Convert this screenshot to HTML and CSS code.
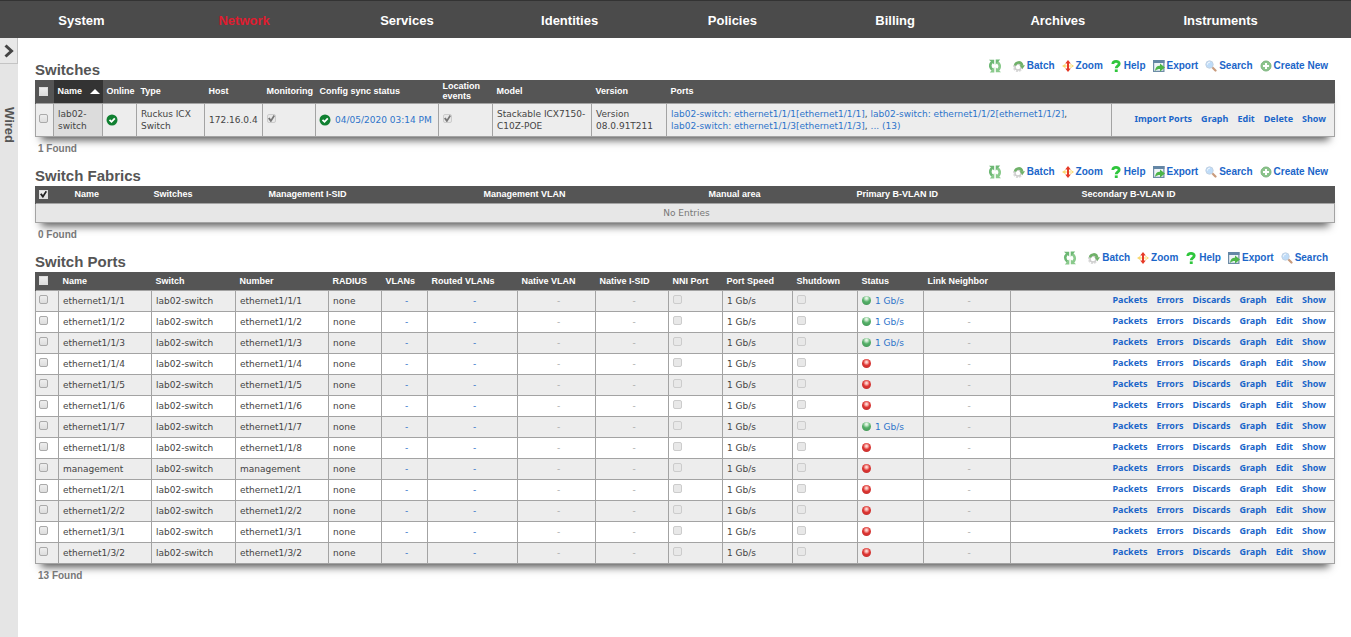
FILE: index.html
```html
<!DOCTYPE html>
<html lang="en">
<head>
<meta charset="utf-8">
<title>Network - Wired</title>
<link rel="stylesheet" href="styles.css">
</head>
<body>
<svg class="sprite" aria-hidden="true">
  <symbol id="i-refresh" viewBox="0 0 14 14">
    <path d="M5.500 2.500C1.800 3.500 1 8 4.500 10.800" fill="none" stroke="#6db874" stroke-width="2.600"/>
    <path d="M1 .8h5.200v4.700z" fill="#6db874"/>
    <path d="M6.300 8.200v5.200H1.800z" fill="#8aca8c"/>
    <path d="M8.500 11.500C12.200 10.500 13 6 9.500 3.200" fill="none" stroke="#8aca8c" stroke-width="2.600"/>
    <path d="M13 13.200H7.800V8.500z" fill="#8aca8c"/>
    <path d="M7.700 5.800V.6h4.500z" fill="#6db874"/>
  </symbol>
  <symbol id="i-batch" viewBox="0 0 12 12">
    <circle cx="5" cy="7" r="4" fill="none" stroke="#dcdcdc" stroke-width="2.400" stroke-dasharray="2 1"/>
    <circle cx="5" cy="7" r="3" fill="none" stroke="#cecece" stroke-width="1.500"/>
    <path d="M2 5.500C3 1.800 8 1 9.200 5.500" fill="none" stroke="#6fb168" stroke-width="2.600"/>
    <path d="M6.500 5.200H12L9.400 9z" fill="#6fb168"/>
  </symbol>
  <symbol id="i-zoom" viewBox="0 0 12 12">
    <path d="M0 6l3.500-2.200v4.400zM12 6L8.500 3.800v4.400zM2 5.400h8v1.200H2z" fill="#f9d870"/>
    <path d="M6 0l2.800 3.500H7v5h1.800L6 12 3.200 8.500H5v-5H3.200z" fill="#e63a26"/>
  </symbol>
  <symbol id="i-help" viewBox="0 0 12 12">
    <path d="M2.800 4C3 .6 9.200.6 9.200 3.700 9.200 5.800 6.200 5.800 6.200 8.300" fill="none" stroke="#2fc63c" stroke-width="2.800"/>
    <path d="M4.800 9.400h2.900V12H4.800z" fill="#2fc63c"/>
  </symbol>
  <symbol id="i-export" viewBox="0 0 12 12">
    <path d="M.6.6h10.300v10.800H.6z" fill="#eef3f7" stroke="#6d8ca6" stroke-width="1.200"/>
    <path d="M0 0h11.500v3H0z" fill="#6486a5"/>
    <path d="M2 11C2.500 7 4.500 5.800 7 5.800V3.500l5 4-5 4V9C5 9 3.500 9.500 2 11z" fill="#4db548"/>
  </symbol>
  <symbol id="i-search" viewBox="0 0 12 12">
    <path d="M7.500 7.500l3 3" stroke="#c99b7c" stroke-width="2.200" stroke-linecap="round"/>
    <circle cx="4.500" cy="4.500" r="3.700" fill="#bfdcf8" stroke="#c3d2e2"/>
    <path d="M2.500 4.500c0-1.500 1-2.300 2.300-2.300" fill="none" stroke="#fff"/>
  </symbol>
  <symbol id="i-create" viewBox="0 0 12 12">
    <circle cx="6" cy="6" r="5" fill="#8cc48c" stroke="#7db57e"/>
    <path d="M6 3v6M3 6h6" stroke="#fff" stroke-width="2"/>
  </symbol>
  <symbol id="i-ok" viewBox="0 0 12 12">
    <circle cx="6" cy="6" r="5.500" fill="#108031"/>
    <path d="M3.500 5.800l2 2 3.300-3.500" fill="none" stroke="#fff" stroke-width="1.800"/>
  </symbol>
</svg>

<nav class="topnav">
  <a href="#">System</a>
  <a href="#" class="current">Network</a>
  <a href="#">Services</a>
  <a href="#">Identities</a>
  <a href="#">Policies</a>
  <a href="#">Billing</a>
  <a href="#">Archives</a>
  <a href="#">Instruments</a>
</nav>

<div class="shell">
  <aside class="rail">
    <button class="rail-toggle" type="button" aria-label="Open panel">
      <svg viewBox="0 0 10 14"><path d="M1.500 1.500L7.500 7l-6 5.500" fill="none" stroke="#444" stroke-width="3"/></svg>
    </button>
    <span class="rail-label">Wired</span>
  </aside>

  <main class="content">
    <section>
      <header class="section-head">
        <h2>Switches</h2>
        <div class="toolbar" data-create="yes"></div>
      </header>
      <table class="grid switches">
        <colgroup><col class="w18"><col class="w49"><col class="w34"><col class="w68"><col class="w58"><col class="w53"><col class="w123"><col class="w54"><col class="w99"><col class="w75"><col class="w445"><col></colgroup>
        <thead>
          <tr>
            <th><input type="checkbox" aria-label="Select all switches"></th>
            <th class="sorted"><span>Name</span></th>
            <th>Online</th><th>Type</th><th>Host</th><th>Monitoring</th><th>Config sync status</th>
            <th>Location events</th><th>Model</th><th>Version</th><th>Ports</th><th></th>
          </tr>
        </thead>
        <tbody>
          <tr>
            <td><input type="checkbox" aria-label="Select lab02-switch"></td>
            <td class="sorted">lab02-switch</td>
            <td><svg class="ok"><use href="#i-ok"/></svg></td>
            <td>Ruckus ICX Switch</td>
            <td>172.16.0.4</td>
            <td><input type="checkbox" checked disabled aria-label="Monitoring"></td>
            <td><div class="sync"><svg class="ok"><use href="#i-ok"/></svg><a href="#">04/05/2020 03:14 PM</a></div></td>
            <td><input type="checkbox" checked disabled aria-label="Location events"></td>
            <td>Stackable ICX7150-C10Z-POE</td>
            <td>Version 08.0.91T211</td>
            <td><a href="#">lab02-switch: ethernet1/1/1[ethernet1/1/1]</a>, <a href="#">lab02-switch: ethernet1/1/2[ethernet1/1/2]</a>,<br><a href="#">lab02-switch: ethernet1/1/3[ethernet1/1/3]</a>, <a href="#">... (13)</a></td>
            <td><div class="actions"><a href="#">Import Ports</a><a href="#">Graph</a><a href="#">Edit</a><a href="#">Delete</a><a href="#">Show</a></div></td>
          </tr>
        </tbody>
      </table>
      <p class="found">1 Found</p>
    </section>

    <section>
      <header class="section-head">
        <h2>Switch Fabrics</h2>
        <div class="toolbar" data-create="yes"></div>
      </header>
      <table class="grid fabrics">
        <colgroup><col class="w35"><col class="w79"><col class="w115"><col class="w215"><col class="w225"><col class="w148"><col class="w225"><col></colgroup>
        <thead>
          <tr>
            <th><input type="checkbox" checked aria-label="Select all switch fabrics"></th>
            <th>Name</th><th>Switches</th><th>Management I-SID</th><th>Management VLAN</th>
            <th>Manual area</th><th>Primary B-VLAN ID</th><th>Secondary B-VLAN ID</th>
          </tr>
        </thead>
        <tbody><tr><td class="empty" colspan="8">No Entries</td></tr></tbody>
      </table>
      <p class="found">0 Found</p>
    </section>

    <section>
      <header class="section-head">
        <h2>Switch Ports</h2>
        <div class="toolbar"></div>
      </header>
      <table class="grid ports">
        <colgroup><col class="w23"><col class="w93"><col class="w84"><col class="w93"><col class="w53"><col class="w46"><col class="w90"><col class="w78"><col class="w73"><col class="w54"><col class="w70"><col class="w65"><col class="w66"><col class="w87"><col></colgroup>
        <thead>
          <tr>
            <th><input type="checkbox" aria-label="Select all ports"></th>
            <th>Name</th><th>Switch</th><th>Number</th><th>RADIUS</th><th>VLANs</th><th>Routed VLANs</th>
            <th>Native VLAN</th><th>Native I-SID</th><th>NNI Port</th><th>Port Speed</th><th>Shutdown</th>
            <th>Status</th><th>Link Neighbor</th><th></th>
          </tr>
        </thead>
        <tbody id="port-rows"></tbody>
      </table>
      <p class="found">13 Found</p>
    </section>
  </main>
</div>
<script src="app.js"></script>
</body>
</html>
```

FILE: styles.css
```css
* { box-sizing: border-box; }

body {
  margin: 0;
  min-height: 100vh;
  display: flex;
  flex-direction: column;
  background: #fff;
  color: #444;
  font: 9px/12px "DejaVu Sans", Verdana, sans-serif;
}

a { color: #2d74ca; text-decoration: none; }
.sprite { display: none; }

.topnav {
  display: grid;
  grid-template-columns: repeat(8, 1fr);
  align-items: center;
  height: 38px;
  padding: 2px 49px 0 0;
  border-top: 1px solid #333;
  background: #4b4b4b;
}
.topnav a {
  color: #fff;
  font: bold 13px/16px "Liberation Sans", Arial, sans-serif;
  text-align: center;
}
.topnav a.current { color: #e01b2f; }

.shell { display: flex; flex: 1; }

.rail {
  flex: none;
  display: flex;
  flex-direction: column;
  width: 18px;
  background: #e5e5e5;
}
.rail-toggle {
  display: flex;
  align-items: center;
  justify-content: center;
  height: 26px;
  padding: 0;
  border: 1px solid #c4c4c4;
  border-width: 0 1px 1px 0;
  background: #e8e8e8;
}
.rail-toggle svg { width: 10px; height: 14px; }
.rail-label {
  margin-top: 43px;
  writing-mode: vertical-rl;
  color: #555;
  font: bold 13px/18px "Liberation Sans", Arial, sans-serif;
}

.content { flex: 1; min-width: 0; padding: 16px 16px 0 17px; }

.section-head {
  display: flex;
  justify-content: space-between;
  align-items: flex-start;
  height: 26px;
}
h2 {
  margin: 7px 0 0;
  color: #555;
  font: bold 15px/17px "Liberation Sans", Arial, sans-serif;
}

.toolbar { display: flex; gap: 7px; padding: 5px 7px 0 0; }
.toolbar button {
  display: flex;
  align-items: center;
  gap: 2px;
  padding: 0;
  border: 0;
  background: none;
  color: #1b66c9;
  font: bold 10px/14px "Liberation Sans", Arial, sans-serif;
}
.toolbar svg { width: 12px; height: 12px; }
.toolbar .refresh { margin-right: 4px; }
.toolbar .refresh svg { width: 14px; height: 14px; }

.grid {
  width: 100%;
  table-layout: fixed;
  border-collapse: collapse;
  box-shadow: 0 9px 8px -6px #555;
}
.grid th {
  height: 18px;
  padding: 0 0 0 4px;
  background: #555;
  color: #fff;
  font: bold 9px/10px "Liberation Sans", Arial, sans-serif;
  text-align: left;
  white-space: nowrap;
}
.grid th:first-child { padding-left: 3px; border-left: 1px solid #555; }
.grid td {
  height: 21px;
  padding: 0 0 0 4px;
  border: 1px solid #a3a3a3;
}
.grid td:first-child { padding-left: 3px; }
.grid tbody tr:nth-child(odd) { background: #ededed; }

.switches th { height: 23px; white-space: normal; }
.switches td { height: 33px; }
.switches th.sorted { background: #333; }
.switches td.sorted { background: #dcdcdc; }
th.sorted span { display: flex; align-items: center; justify-content: space-between; padding-right: 3px; }
th.sorted span::after {
  content: "";
  border: 5px solid transparent;
  border-top: 0;
  border-bottom-color: #fff;
}

.fabrics td { height: 19px; }
.grid td.empty { background: #e7e7e7; color: #777; text-align: center; }

.grid .dash { color: #aaa; text-align: center; }

.sync, .status { display: flex; align-items: center; gap: 4px; }
.ok { display: block; flex: none; width: 12px; height: 12px; }
.grid td:has(.ok) { padding-left: 3px; }
.led {
  width: 9px;
  height: 9px;
  border-radius: 50%;
  background: radial-gradient(circle at 50% 25%, #e4f5e4 10%, #55b068 45%, #3f9153);
}
.led.down { background: radial-gradient(circle at 50% 35%, #ffd5d0 10%, #dd3431 45%, #b93030); }

.actions { display: flex; justify-content: flex-end; gap: 9px; padding: 0 8px 2px 0; }
.actions a {
  color: #1b66c9;
  font: bold 9px/12px "Noto Sans", "Open Sans", sans-serif;
  white-space: nowrap;
}

input[type="checkbox"] {
  appearance: none;
  display: block;
  width: 9px;
  height: 9px;
  margin: 0 0 2px;
  border: 1px solid #aaa;
  border-radius: 2px;
  background: linear-gradient(#eee, #ddd);
}
th input[type="checkbox"] { margin: 0; border-color: #ddd; border-radius: 0; }
input[type="checkbox"]:disabled { border-color: #ccc; background: #e8e8e8; }
input[type="checkbox"]:checked::after {
  content: "";
  display: block;
  height: 7px;
  background: #222;
  clip-path: polygon(0 50%, 22% 35%, 42% 62%, 80% 0, 100% 14%, 46% 100%, 36% 100%);
}
input[type="checkbox"]:disabled:checked::after { background: #777; }

.found {
  height: 23px;
  margin: 0;
  padding: 5px 3px 0;
  color: #777;
  font: bold 10px/14px "Liberation Sans", Arial, sans-serif;
}

.w18 { width: 18px; }
.w23 { width: 23px; }
.w34 { width: 34px; }
.w35 { width: 35px; }
.w46 { width: 46px; }
.w49 { width: 49px; }
.w53 { width: 53px; }
.w54 { width: 54px; }
.w58 { width: 58px; }
.w65 { width: 65px; }
.w66 { width: 66px; }
.w68 { width: 68px; }
.w70 { width: 70px; }
.w73 { width: 73px; }
.w75 { width: 75px; }
.w78 { width: 78px; }
.w79 { width: 79px; }
.w84 { width: 84px; }
.w87 { width: 87px; }
.w90 { width: 90px; }
.w93 { width: 93px; }
.w99 { width: 99px; }
.w115 { width: 115px; }
.w123 { width: 123px; }
.w148 { width: 148px; }
.w215 { width: 215px; }
.w225 { width: 225px; }
.w445 { width: 445px; }
```

FILE: app.js
```js
const tools = [["batch", "Batch"], ["zoom", "Zoom"], ["help", "Help"], ["export", "Export"], ["search", "Search"]];

document.querySelectorAll(".toolbar").forEach((bar) => {
  const list = bar.dataset.create ? [...tools, ["create", "Create New"]] : tools;
  bar.innerHTML =
    '<button type="button" class="refresh" aria-label="Refresh"><svg><use href="#i-refresh"/></svg></button>' +
    list.map(([icon, label]) => `<button type="button"><svg><use href="#i-${icon}"/></svg>${label}</button>`).join("");
});

const ports = [
  ["ethernet1/1/1", true], ["ethernet1/1/2", true], ["ethernet1/1/3", true],
  ["ethernet1/1/4", false], ["ethernet1/1/5", false], ["ethernet1/1/6", false],
  ["ethernet1/1/7", true], ["ethernet1/1/8", false], ["management", false],
  ["ethernet1/2/1", false], ["ethernet1/2/2", false], ["ethernet1/3/1", false],
  ["ethernet1/3/2", false],
];
const actions = ["Packets", "Errors", "Discards", "Graph", "Edit", "Show"];

document.getElementById("port-rows").innerHTML = ports.map(([name, up]) => `
  <tr>
    <td><input type="checkbox" aria-label="Select ${name}"></td>
    <td>${name}</td><td>lab02-switch</td><td>${name}</td><td>none</td>
    <td class="dash"><a href="#">-</a></td><td class="dash"><a href="#">-</a></td>
    <td class="dash">-</td><td class="dash">-</td>
    <td><input type="checkbox" disabled aria-label="NNI port ${name}"></td>
    <td>1 Gb/s</td>
    <td><input type="checkbox" disabled aria-label="Shutdown ${name}"></td>
    <td><div class="status"><span class="led${up ? "" : " down"}"></span>${up ? '<a href="#">1 Gb/s</a>' : ""}</div></td>
    <td class="dash">-</td>
    <td><div class="actions">${actions.map((a) => `<a href="#">${a}</a>`).join("")}</div></td>
  </tr>`).join("");
```
